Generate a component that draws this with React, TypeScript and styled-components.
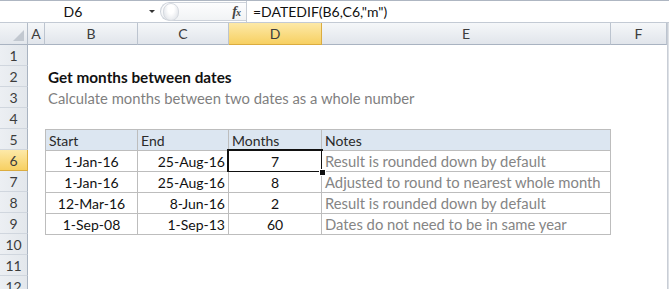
import React from 'react';
import styled, { createGlobalStyle, css } from 'styled-components';

const GlobalStyle = createGlobalStyle`
  html, body {
    margin: 0;
    padding: 0;
    background: #fff;
  }
  body {
    font-family: Lato, "Liberation Sans", sans-serif;
  }
`;

const COLUMNS = ['A', 'B', 'C', 'D', 'E', 'F'];
const ROWS = [1, 2, 3, 4, 5, 6, 7, 8, 9, 10, 11, 12];

const data = [
  { start: '1-Jan-16', end: '25-Aug-16', months: '7', note: 'Result is rounded down by default' },
  { start: '1-Jan-16', end: '25-Aug-16', months: '8', note: 'Adjusted to round to nearest whole month' },
  { start: '12-Mar-16', end: '8-Jun-16', months: '2', note: 'Result is rounded down by default' },
  { start: '1-Sep-08', end: '1-Sep-13', months: '60', note: 'Dates do not need to be in same year' },
];

const Window = styled.div`
  width: 669px;
  height: 289px;
  overflow: hidden;
  display: flex;
  flex-direction: column;
  background: #fff;
  font-size: 14px;
  color: #222;
`;

const FormulaBar = styled.div`
  height: 23px;
  box-sizing: border-box;
  display: flex;
  align-items: stretch;
  border-top: 1px solid #aeb6c2;
  border-bottom: 1px solid #c3cad4;
  background: #fff;
`;

const NameBox = styled.div`
  width: 146px;
  display: flex;
  align-items: center;
  justify-content: center;
  font-size: 14px;
  color: #111;
`;

const DropButton = styled.div`
  width: 12px;
  display: flex;
  align-items: center;
  justify-content: center;
  &::after {
    content: '';
    border-left: 3px solid transparent;
    border-right: 3px solid transparent;
    border-top: 3px solid #333;
  }
`;

const Grip = styled.div`
  width: 86px;
  margin: 1px 0 1px 2px;
  box-sizing: border-box;
  display: flex;
  align-items: center;
  justify-content: space-between;
  border: 1px solid #cdd2da;
  border-right: none;
  border-radius: 10px 0 0 10px;
  background: linear-gradient(#fdfdfe, #f1f3f5);
`;

const GripKnob = styled.span`
  width: 14px;
  height: 16px;
  margin-left: 2px;
  border-radius: 8px;
  background: radial-gradient(ellipse at 50% 30%, #ffffff 30%, #e3e6eb 80%);
  border: 1px solid #d6dae0;
`;

const Fx = styled.span`
  font-family: "Liberation Serif", serif;
  font-style: italic;
  font-weight: bold;
  font-size: 14px;
  color: #444;
  padding-right: 6px;
  letter-spacing: -1px;
  small {
    font-size: 10px;
  }
`;

const FormulaInput = styled.div`
  flex: 1;
  display: flex;
  align-items: center;
  padding-left: 6px;
  border-left: 1px solid #c6ccd5;
  font-size: 14px;
  color: #111;
`;

const Spacer = styled.div`
  height: 1px;
  background: #e4e7eb;
`;

const Sheet = styled.div`
  display: grid;
  grid-template-columns: 28px 17px 93px 91px 93px 289px 56px 2px;
  grid-template-rows: 22px repeat(12, 21px);
`;

const headerBase = css`
  box-sizing: border-box;
  display: flex;
  align-items: center;
  justify-content: center;
  font-size: 14px;
  color: #3c3c3c;
`;

const activeHeader = css`
  background: linear-gradient(#fde9a8, #f7d062);
  border-color: #dbac3f;
`;

const Corner = styled.div`
  ${headerBase};
  grid-row: 1;
  grid-column: 1;
  background: linear-gradient(#f4f6f8, #e2e6ec);
  border-right: 1px solid #b3bcc8;
  border-bottom: 1px solid #a9b3c1;
  position: relative;
  &::after {
    content: '';
    position: absolute;
    right: 3px;
    bottom: 3px;
    border-left: 11px solid transparent;
    border-bottom: 11px solid #c2c8d0;
  }
`;

const ColHead = styled.div<{ $col: number; $active?: boolean }>`
  ${headerBase};
  grid-row: 1;
  grid-column: ${(p) => p.$col};
  background: linear-gradient(#f5f7f9, #e1e5eb);
  border-right: 1px solid #bcc4cf;
  border-bottom: 1px solid #a9b3c1;
  ${(p) => p.$active && activeHeader};
`;

const RowHead = styled.div<{ $row: number; $active?: boolean }>`
  ${headerBase};
  grid-column: 1;
  grid-row: ${(p) => p.$row};
  background: linear-gradient(90deg, #eceff3, #e3e7ec);
  border-right: 1px solid #a9b3c1;
  border-bottom: 1px solid #d0d6de;
  ${(p) => p.$active && activeHeader};
`;

const ScrollEdge = styled.div`
  grid-column: 8;
  grid-row: 1 / span 13;
  background: #dde1e6;
  border-left: 1px solid #c9ced6;
`;

const SheetText = styled.div<{ $row: number; $col: number; $muted?: boolean; $bold?: boolean }>`
  grid-row: ${(p) => p.$row};
  grid-column: ${(p) => p.$col};
  display: flex;
  align-items: center;
  padding-left: 3px;
  white-space: nowrap;
  overflow: visible;
  font-size: ${(p) => (p.$bold ? '15.3px' : '14.8px')};
  font-weight: ${(p) => (p.$bold ? 700 : 400)};
  color: ${(p) => (p.$muted ? '#7f7f7f' : '#111')};
`;

const Table = styled.div`
  grid-column: 3 / span 4;
  grid-row: 6 / span 5;
  align-self: start;
  display: grid;
  grid-template-columns: 92px 91px 93px 289px;
  grid-auto-rows: 21px;
  border-top: 1px solid #bdbdbd;
  border-left: 1px solid #bdbdbd;
`;

const TableCell = styled.div<{
  $align?: 'left' | 'center' | 'right';
  $head?: boolean;
  $muted?: boolean;
  $active?: boolean;
}>`
  box-sizing: border-box;
  display: flex;
  align-items: center;
  justify-content: ${(p) =>
    p.$align === 'center' ? 'center' : p.$align === 'right' ? 'flex-end' : 'flex-start'};
  padding: 0 3px;
  border-right: 1px solid #bdbdbd;
  border-bottom: 1px solid #bdbdbd;
  white-space: nowrap;
  font-size: ${(p) => (p.$muted ? '14.8px' : '14px')};
  background: ${(p) => (p.$head ? '#dce6f1' : '#fff')};
  color: ${(p) => (p.$muted ? '#858585' : p.$head ? '#2a2a2a' : '#111')};
  position: relative;
  ${(p) =>
    p.$active &&
    css`
      &::after {
        content: '';
        position: absolute;
        left: -2px;
        top: -2px;
        right: -2px;
        bottom: -2px;
        border: 2px solid #111;
      }
      &::before {
        content: '';
        position: absolute;
        right: -5px;
        bottom: -5px;
        width: 5px;
        height: 5px;
        background: #111;
        border: 1px solid #fff;
        z-index: 2;
      }
    `};
`;

export default function App() {
  return (
    <Window>
      <GlobalStyle />
      <FormulaBar>
        <NameBox>D6</NameBox>
        <DropButton />
        <Grip>
          <GripKnob />
          <Fx>
            f<small>x</small>
          </Fx>
        </Grip>
        <FormulaInput>=DATEDIF(B6,C6,"m")</FormulaInput>
      </FormulaBar>
      <Spacer />
      <Sheet>
        <Corner />
        {COLUMNS.map((c, i) => (
          <ColHead key={c} $col={i + 2} $active={c === 'D'}>
            {c}
          </ColHead>
        ))}
        {ROWS.map((r) => (
          <RowHead key={r} $row={r + 1} $active={r === 6}>
            {r}
          </RowHead>
        ))}
        <ScrollEdge />

        <SheetText $row={3} $col={3} $bold>
          Get months between dates
        </SheetText>
        <SheetText $row={4} $col={3} $muted>
          Calculate months between two dates as a whole number
        </SheetText>

        <Table>
          <TableCell $head>Start</TableCell>
          <TableCell $head>End</TableCell>
          <TableCell $head>Months</TableCell>
          <TableCell $head>Notes</TableCell>
          {data.map((d, i) => (
            <React.Fragment key={i}>
              <TableCell $align="center">{d.start}</TableCell>
              <TableCell $align="right">{d.end}</TableCell>
              <TableCell $align="center" $active={i === 0}>
                {d.months}
              </TableCell>
              <TableCell $muted>{d.note}</TableCell>
            </React.Fragment>
          ))}
        </Table>
      </Sheet>
    </Window>
  );
}
